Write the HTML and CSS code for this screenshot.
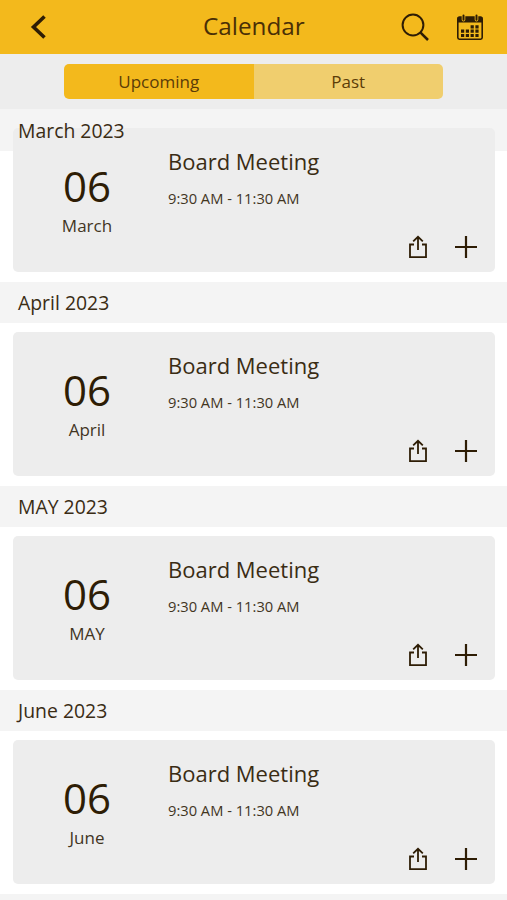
FILE: index.html
```html
<!DOCTYPE html>
<html lang="en">

<head>
  <meta charset="UTF-8" />
  <title>Calendar</title>
  <link rel="stylesheet" href="styles.css">
</head>

<body>
  <!-- shared icons -->
  <svg class="sprite">
    <symbol id="share" viewBox="0 0 20 24">
      <path d="M6 9.5H2V22.2H18V9.5H14M10 15V2M5.2 6.4L10 1.8L14.8 6.4" fill="none" stroke="currentColor" stroke-width="1.8" />
    </symbol>
    <symbol id="plus" viewBox="0 0 22 22">
      <path d="M11 0V22M0 11H22" fill="none" stroke="currentColor" stroke-width="2.2" />
    </symbol>
  </svg>

  <header class="topbar">
    <svg class="back" viewBox="0 0 16 24">
      <path d="M14.5 1.5L3.5 12L14.5 22.5" fill="none" stroke="currentColor" stroke-width="3.6" />
    </svg>
    <h1 class="title">Calendar</h1>
    <svg class="search" viewBox="0 0 28 28">
      <circle cx="12" cy="12" r="10.4" fill="none" stroke="currentColor" stroke-width="2" />
      <path d="M19.3 19.3L27 27" fill="none" stroke="currentColor" stroke-width="2.5" />
    </svg>
    <svg class="grid" viewBox="0 0 26 26">
      <rect x="0.8" y="3.2" width="24.4" height="22" rx="1.6" fill="none" stroke="currentColor" stroke-width="1.6" />
      <path d="M0.5 8.5V4Q0.5 2.5 2 2.5H24Q25.5 2.5 25.5 4V8.5Z" fill="currentColor" />
      <path d="M6.5 1.6V5.8M19.5 1.6V5.8" stroke="#f3b91c" stroke-width="3.6" stroke-linecap="round" />
      <path d="M6.5 1.4V5.8M19.5 1.4V5.8" stroke="currentColor" stroke-width="2" stroke-linecap="round" />
      <path d="M13.6 11.2h3.2v3.2h-3.2zM18.4 11.2h3.2v3.2h-3.2zM4 15.6h3.2v3.2h-3.2zM8.8 15.6h3.2v3.2h-3.2zM13.6 15.6h3.2v3.2h-3.2zM18.4 15.6h3.2v3.2h-3.2zM4 20h3.2v3h-3.2zM8.8 20h3.2v3h-3.2zM13.6 20h3.2v3h-3.2zM18.4 20h3.2v3h-3.2z" fill="currentColor" />
    </svg>
  </header>

  <nav class="tabs">
    <div class="tab active">Upcoming</div>
    <div class="tab">Past</div>
  </nav>

  <main class="list">
    <h2 class="month first"><span>March 2023</span></h2>
    <div class="card">
      <div class="date">
        <div class="day">06</div>
        <div class="name">March</div>
      </div>
      <div class="info">
        <div class="event">Board Meeting</div>
        <div class="time">9:30 AM - 11:30 AM</div>
        <div class="actions">
          <svg class="share"><use href="#share" /></svg>
          <svg class="plus"><use href="#plus" /></svg>
        </div>
      </div>
    </div>

    <h2 class="month"><span>April 2023</span></h2>
    <div class="card">
      <div class="date">
        <div class="day">06</div>
        <div class="name">April</div>
      </div>
      <div class="info">
        <div class="event">Board Meeting</div>
        <div class="time">9:30 AM - 11:30 AM</div>
        <div class="actions">
          <svg class="share"><use href="#share" /></svg>
          <svg class="plus"><use href="#plus" /></svg>
        </div>
      </div>
    </div>

    <h2 class="month"><span>MAY 2023</span></h2>
    <div class="card">
      <div class="date">
        <div class="day">06</div>
        <div class="name">MAY</div>
      </div>
      <div class="info">
        <div class="event">Board Meeting</div>
        <div class="time">9:30 AM - 11:30 AM</div>
        <div class="actions">
          <svg class="share"><use href="#share" /></svg>
          <svg class="plus"><use href="#plus" /></svg>
        </div>
      </div>
    </div>

    <h2 class="month"><span>June 2023</span></h2>
    <div class="card">
      <div class="date">
        <div class="day">06</div>
        <div class="name">June</div>
      </div>
      <div class="info">
        <div class="event">Board Meeting</div>
        <div class="time">9:30 AM - 11:30 AM</div>
        <div class="actions">
          <svg class="share"><use href="#share" /></svg>
          <svg class="plus"><use href="#plus" /></svg>
        </div>
      </div>
    </div>

    <div class="month"></div>
  </main>
</body>

</html>
```

FILE: styles.css
```css
* {
  margin: 0;
  padding: 0;
  box-sizing: border-box;
}

body {
  height: 900px;
  display: flex;
  flex-direction: column;
  overflow: hidden;
  background-color: #fff;
  color: #2e1d05;
  font-family: "Open Sans", "Noto Sans", sans-serif;
}

svg {
  display: block;
}

.sprite {
  display: none;
}

.topbar {
  height: 54px;
  flex-shrink: 0;
  display: grid;
  grid-template-columns: 106px 1fr 28px 26px;
  column-gap: 28px;
  align-items: center;
  padding: 0 24px 0 30px;
  background-color: #f3b91c;
}

.back {
  width: 16px;
  height: 24px;
}

.title {
  font-size: 24.3px;
  font-weight: 400;
  line-height: 52px;
  padding-bottom: 2px;
  padding-left: 39px;
  color: #4a2f06;
}

.search {
  width: 28px;
  height: 28px;
}

.grid {
  width: 26px;
  height: 26px;
}

.tabs {
  height: 55px;
  flex-shrink: 0;
  display: flex;
  padding: 10px 64px;
  background-color: #ededed;
}

.tab {
  flex: 1;
  height: 35px;
  line-height: 36px;
  font-size: 17px;
  text-align: center;
  color: #5b3c08;
  background-color: #f0ce6e;
  border-radius: 0 5px 5px 0;
}

.tab.active {
  background-color: #f3b91c;
  border-radius: 5px 0 0 5px;
}

.list {
  flex: 1;
  overflow: hidden;
}

.month {
  height: 41px;
  padding-left: 18px;
  line-height: 41px;
  font-size: 19.4px;
  font-weight: 400;
  color: #3a2c14;
  background-color: #f4f4f4;
}

.month span {
  position: relative;
  z-index: 1;
}

.card {
  height: 144px;
  margin: 9px 12px 10px 13px;
  display: flex;
  background-color: #ededed;
  border-radius: 5px;
}

/* the pinned month stays above the card scrolled under it */
.month.first {
  height: 42px;
  line-height: 43px;
}

.first + .card {
  position: relative;
  margin-top: -23px;
}

.date {
  width: 148px;
  padding-top: 28px;
  text-align: center;
}

.day {
  font-size: 42px;
  line-height: 60px;
}

.name {
  font-size: 17px;
  line-height: 20px;
  color: #42351f;
}

.info {
  flex: 1;
  padding: 17px 18px 0 7px;
}

.event {
  font-size: 22px;
  line-height: 32px;
  color: #3a2c14;
}

.time {
  padding-top: 10px;
  font-size: 14.7px;
  line-height: 22px;
  color: #42351f;
}

.actions {
  display: flex;
  justify-content: flex-end;
  align-items: center;
  gap: 27px;
  padding-top: 26px;
}

.share {
  width: 20px;
  height: 24px;
}

.plus {
  width: 22px;
  height: 22px;
}
```
